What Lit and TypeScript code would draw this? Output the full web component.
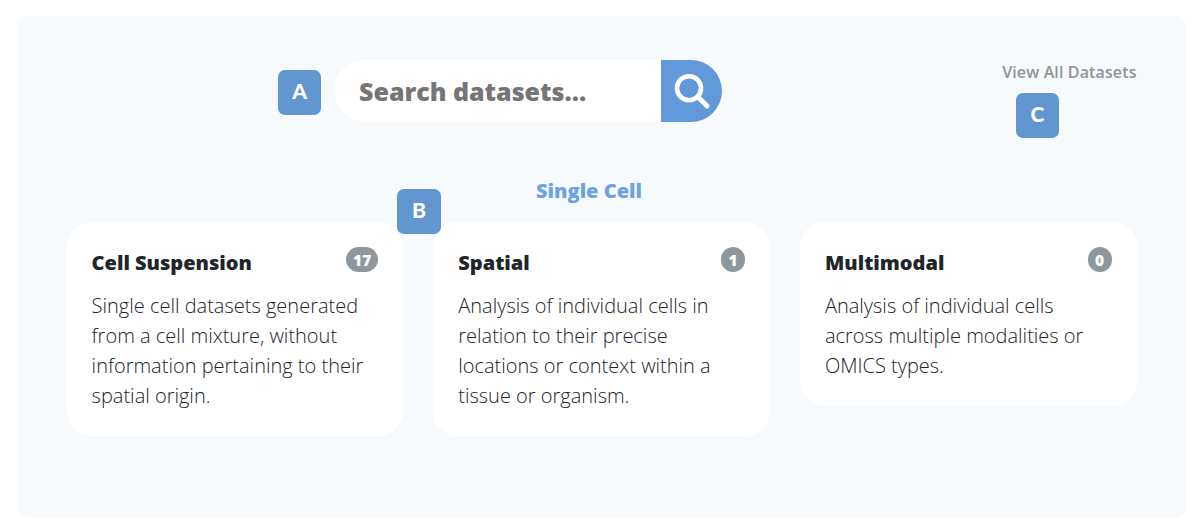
import { LitElement, html, css } from "lit";
import { customElement } from "lit/decorators.js";

interface Category { title: string; count: number; lines: string[]; }

const CATEGORIES: Category[] = [
  { title: "Cell Suspension", count: 17, lines: ["Single cell datasets generated", "from a cell mixture, without", "information pertaining to their", "spatial origin."] },
  { title: "Spatial", count: 1, lines: ["Analysis of individual cells in", "relation to their precise", "locations or context within a", "tissue or organism."] },
  { title: "Multimodal", count: 0, lines: ["Analysis of individual cells", "across multiple modalities or", "OMICS types."] },
];

@customElement("app-root")
export class AppRoot extends LitElement {
  static styles = css`
    :host { display: block; box-sizing: border-box; height: 530px; padding: 16px 12px 13px 17px; background: #fff; font-family: "Open Sans", sans-serif; color: #212529; }
    * { box-sizing: border-box; }
    .panel { position: relative; height: 501px; background: #f6fafd; border-radius: 12px; padding: 44px 50px 0; }
    .top { display: flex; justify-content: space-between; height: 63px; padding-left: 267px; }
    .search { display: flex; width: 388px; height: 62px; border-radius: 31px; overflow: hidden; background: #fff; }
    .field { flex: 1; padding-left: 25px; line-height: 63px; font-size: 25px; font-weight: 800; color: #757575; white-space: nowrap; }
    .go { width: 61px; background: #6299db; display: block; }
    .all { font-size: 16px; line-height: 24px; font-weight: 600; letter-spacing: 0.13px; margin-right: 0.4px; color: #909497; white-space: nowrap; }
    h2 { margin: 53px 0 0; padding-right: 26px; text-align: center; font-size: 20px; line-height: 30px; font-weight: 800; color: #6ea2e0; }
    .cards { display: grid; grid-template-columns: repeat(3, 1fr); gap: 30px; align-items: start; margin: 16px 0.4px 0 -0.4px; }
    .card { background: #fff; border-radius: 25px; padding: 25px; }
    .head { display: flex; justify-content: space-between; height: 30px; }
    h3 { margin: 0; font-size: 20px; line-height: 32px; font-weight: 800; }
    .count { height: 25px; min-width: 24px; padding: 0 7px; border-radius: 13px; background: #8e979b; color: #fff; font-size: 15.5px; line-height: 26px; font-weight: 800; text-align: center; }
    p { margin: 14px 0 0; font-size: 20px; line-height: 30px; font-weight: 300; white-space: nowrap; }
    .tag { position: absolute; width: 43px; height: 45px; border-radius: 7px; background: #6296d1; color: #fff; font-family: Lato, sans-serif; font-size: 21px; line-height: 42px; font-weight: 900; text-align: center; }
    .a { left: 261px; top: 54px; } .b { left: 380px; top: 173px; width: 44px; line-height: 41px; } .c { left: 999px; top: 77px; line-height: 41px; }
  `;

  render() {
    return html`<section class="panel">
      <div class="top">
        <div class="search"><div class="field">Search datasets...</div>
          <svg class="go" width="61" height="62" viewBox="0 0 61 62" fill="none" stroke="#fff"><circle cx="28" cy="28.2" r="12" stroke-width="4.6"/><path d="M37 37L46 46" stroke-width="5" stroke-linecap="round"/></svg>
        </div>
        <a class="all">View All Datasets</a>
      </div>
      <h2>Single Cell</h2>
      <div class="cards">${CATEGORIES.map((c) => html`<article class="card">
        <div class="head"><h3>${c.title}</h3><span class="count">${c.count}</span></div>
        <p>${c.lines.map((l, i) => html`${i ? html`<br>` : ""}${l}`)}</p>
      </article>`)}</div>
      <span class="tag a">A</span><span class="tag b">B</span><span class="tag c">C</span>
    </section>`;
  }
}
